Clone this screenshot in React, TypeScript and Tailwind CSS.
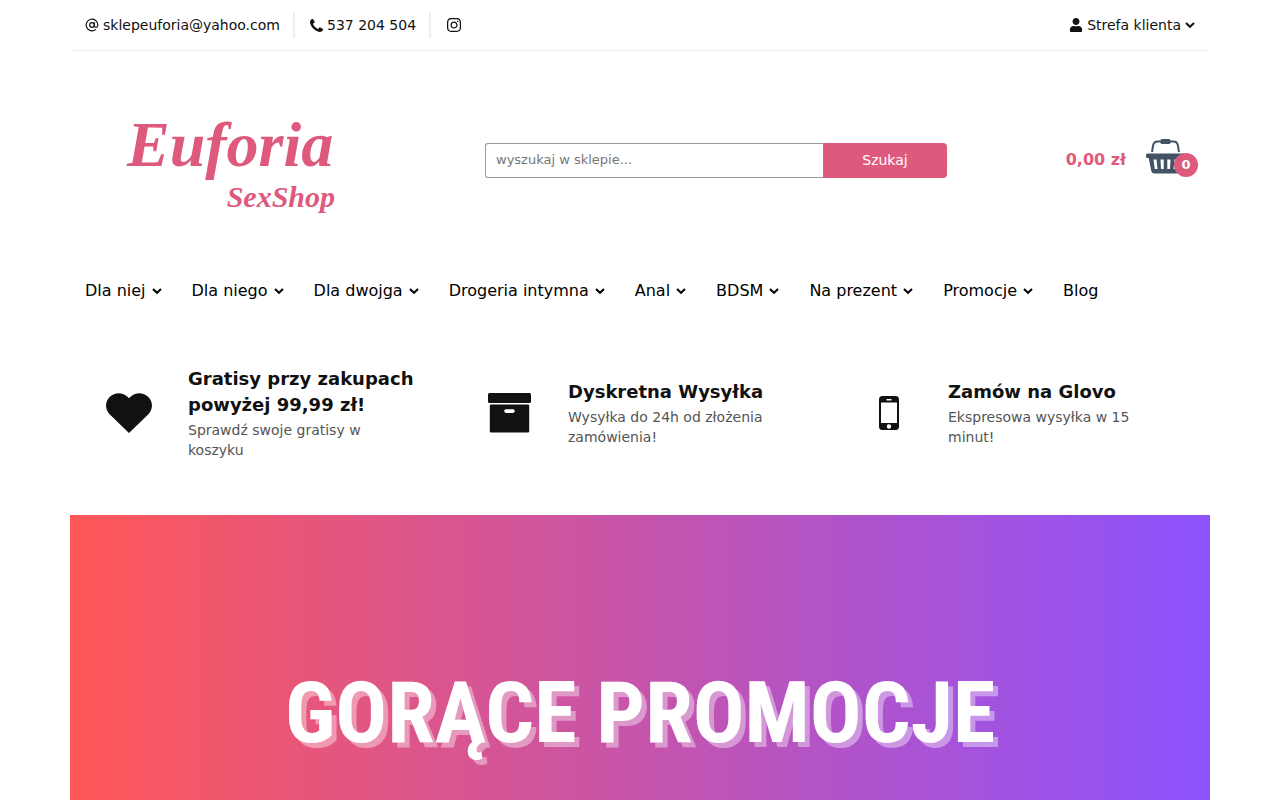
import { FaInstagram, FaUser } from 'react-icons/fa';
import { FiAtSign } from 'react-icons/fi';

const menu = [
  { name: 'Dla niej', sub: true },
  { name: 'Dla niego', sub: true },
  { name: 'Dla dwojga', sub: true },
  { name: 'Drogeria intymna', sub: true },
  { name: 'Anal', sub: true },
  { name: 'BDSM', sub: true },
  { name: 'Na prezent', sub: true },
  { name: 'Promocje', sub: true },
  { name: 'Blog', sub: false },
];

const features = [
  { icon: HeartIcon, title: 'Gratisy przy zakupach powyżej 99,99 zł!', text: 'Sprawdź swoje gratisy w koszyku' },
  { icon: BoxIcon, title: 'Dyskretna Wysyłka', text: 'Wysyłka do 24h od złożenia zamówienia!' },
  { icon: MobileIcon, title: 'Zamów na Glovo', text: 'Ekspresowa wysyłka w 15 minut!' },
];

function Chevron() {
  return (
    <svg className="w-[10px] h-[10px] shrink-0" viewBox="0 0 10 10" fill="none" stroke="currentColor" strokeWidth="2">
      <path d="M1 3 5 6.8 9 3" />
    </svg>
  );
}

function PhoneIcon() {
  return (
    <svg className="w-[13px] h-[13px]" viewBox="0 128 1408 1408" fill="currentColor">
      <path d="M1408 1240q0 27-10 70.5t-21 68.5q-21 50-122 106-94 51-186 51-27 0-53-3.5t-57.5-12.5-47-14.5-55.5-20.5-49-18q-98-35-175-83-127-79-264-216t-216-264q-48-77-83-175-3-9-18-49t-20.5-55.5-14.5-47-12.5-57.5-3.5-53q0-92 51-186 56-101 106-122 25-11 68.5-21t70.5-10q14 0 21 3 18 6 53 76 11 19 30 54t35 63.5 31 53.5q3 4 17.5 25t21.5 35.5 7 28.5q0 20-28.5 50t-62 55-62 53-28.5 46q0 9 5 22.5t8.5 20.5 14 24 11.5 19q76 137 174 235t235 174q2 1 19 11.5t24 14 20.5 8.5 22.5 5q18 0 46-28.5t53-62 55-62 50-28.5q14 0 28.5 7t35.5 21.5 25 17.5q25 15 53.5 31t63.5 35 54 30q70 35 76 53 3 7 3 21z" />
    </svg>
  );
}

function HeartIcon() {
  return (
    <svg className="w-[46px] h-[40px]" viewBox="0 0 46 40" fill="currentColor">
      <path d="M23 40 3.6 21.2C-1.2 16.5-1.1 8.6 3.6 4 8.3-.9 16-1.1 20.9 3.2L23 5.2 25.1 3.2C30-1.1 37.7-.9 42.4 4 47.1 8.6 47.2 16.5 42.4 21.2Z" />
    </svg>
  );
}

function BoxIcon() {
  return (
    <svg className="w-[43px] h-[40px]" viewBox="0 0 43 40" fill="currentColor">
      <rect width="43" height="10" rx="1.5" />
      <path fillRule="evenodd" d="M3 11.5H40Q41.2 11.5 41.2 12.7V38.2Q41.2 39.5 40 39.5H3Q1.8 39.5 1.8 38.2V12.7Q1.8 11.5 3 11.5ZM18 16.3A1.8 1.8 0 0 0 18 19.9H25A1.8 1.8 0 0 0 25 16.3Z" />
    </svg>
  );
}

function MobileIcon() {
  return (
    <svg className="w-[20px] h-[34px]" viewBox="0 0 20 34" fill="currentColor">
      <path fillRule="evenodd" d="M3.5 0H16.5Q20 0 20 3.5V30.5Q20 34 16.5 34H3.5Q0 34 0 30.5V3.5Q0 0 3.5 0ZM2 6.5V27H18V6.5ZM7.5 3V4.4H12.5V3ZM10 28.3A2.2 2.2 0 1 0 10 32.7 2.2 2.2 0 1 0 10 28.3Z" />
    </svg>
  );
}

function BasketIcon() {
  return (
    <svg className="w-[39px] h-[35px]" viewBox="0 0 39 35" fill="#435264">
      <path d="M6 13 7.2 6Q8 2.5 11.5 2.5H27.5Q31 2.5 31.8 6L33 13" fill="none" stroke="#435264" strokeWidth="2" />
      <rect x="14.5" y="0" width="10" height="5" rx="1.5" />
      <rect x="0" y="14.5" width="39" height="4.5" rx="1.5" />
      <path fillRule="evenodd" d="M2.5 18H36.5L33.7 32Q33.2 34.5 30.5 34.5H8.5Q5.8 34.5 5.3 32ZM7.5 20.5 8.8 30H11.5L10.5 20.5ZM14.5 20.5 15 30H17.7V20.5ZM21.3 20.5V30H24L24.5 20.5ZM28.5 20.5 27.5 30H30.2L31.5 20.5Z" />
    </svg>
  );
}

export default function App() {
  return (
    <div className="min-h-screen bg-white flex flex-col font-['DejaVu_Sans',Verdana,sans-serif] text-[#111]">
      <div className="w-full max-w-[1140px] mx-auto flex-1 flex flex-col">
        {/* Top bar */}
        <div className="flex items-center justify-between border-b border-[#eee] px-[15px] py-3 text-sm">
          <div className="flex items-center">
            <a href="mailto:sklepeuforia@yahoo.com" className="flex items-center gap-1 pr-[13px] h-[26px] border-r-2 border-[#eee]">
              <FiAtSign className="w-[14px] h-[14px]" />
              sklepeuforia@yahoo.com
            </a>
            <a href="tel:537204504" className="flex items-center gap-1 pl-[15px] pr-[13px] h-[26px] border-r-2 border-[#eee]">
              <PhoneIcon />
              537 204 504
            </a>
            <a href="#" aria-label="Instagram" className="pl-[15px]">
              <FaInstagram className="w-4 h-4" />
            </a>
          </div>
          <button type="button" className="flex items-center gap-1">
            <FaUser className="w-[14px] h-[14px]" />
            Strefa klienta
            <Chevron />
          </button>
        </div>

        {/* Header */}
        <header className="flex items-center pl-[57px] pr-3 py-[57px]">
          <a href="#" className="flex flex-col w-[208px] h-[104px] text-[#dd5a7d] font-['Liberation_Serif',serif] font-bold italic">
            <span className="text-[64px] leading-[74px]">Euforia</span>
            <span className="text-[30px] leading-[30px] self-end">SexShop</span>
          </a>
          <form className="flex w-[462px] h-[35px] ml-[150px]">
            <input
              type="text"
              aria-label="Szukaj w sklepie"
              placeholder="wyszukaj w sklepie..."
              className="flex-1 min-w-0 border border-r-0 border-[#999] rounded-l-[3px] px-[10px] text-[13px] placeholder:text-[#777]"
            />
            <button type="button" className="w-[124px] bg-[#dd5a7d] text-white text-sm rounded-r">
              Szukaj
            </button>
          </form>
          <a href="#" className="flex items-center gap-5 ml-auto text-[#dd5a7d]">
            <span className="font-bold text-base">0,00 zł</span>
            <span className="relative pr-[13px] pb-[7px]">
              <BasketIcon />
              <span className="absolute right-0 bottom-1 w-6 h-6 rounded-full bg-[#dd5a7d] text-white text-[13px] font-bold flex items-center justify-center">
                0
              </span>
            </span>
          </a>
        </header>

        {/* Menu */}
        <nav className="flex flex-wrap gap-[30px] px-[15px] py-3 text-base leading-5 text-black">
          {menu.map((item) => (
            <a key={item.name} href="#" className="flex items-center gap-[6px]">
              {item.name}
              {item.sub && <Chevron />}
            </a>
          ))}
        </nav>

        {/* Features */}
        <section className="grid grid-cols-3 items-center pt-[53px] pb-[55px]">
          {features.map((feature) => (
            <div key={feature.title} className="flex items-center">
              <div className="w-[118px] flex justify-center">
                <feature.icon />
              </div>
              <div className="w-[232px]">
                <h3 className="text-lg leading-[26px] font-bold">{feature.title}</h3>
                <p className="text-sm leading-5 mt-[2px] text-[#555]">{feature.text}</p>
              </div>
            </div>
          ))}
        </section>

        {/* Banner */}
        <section className="flex-1 bg-linear-to-r/srgb from-[#ff5757] to-[#8c52ff] pt-[150px] text-center">
          <h2 className="font-['Roboto_Condensed',Roboto,sans-serif] font-bold text-[86px] leading-[96px] text-white [text-shadow:5px_5px_0_rgba(255,255,255,0.4)]">
            GORĄCE PROMOCJE
          </h2>
        </section>
      </div>
    </div>
  );
}
